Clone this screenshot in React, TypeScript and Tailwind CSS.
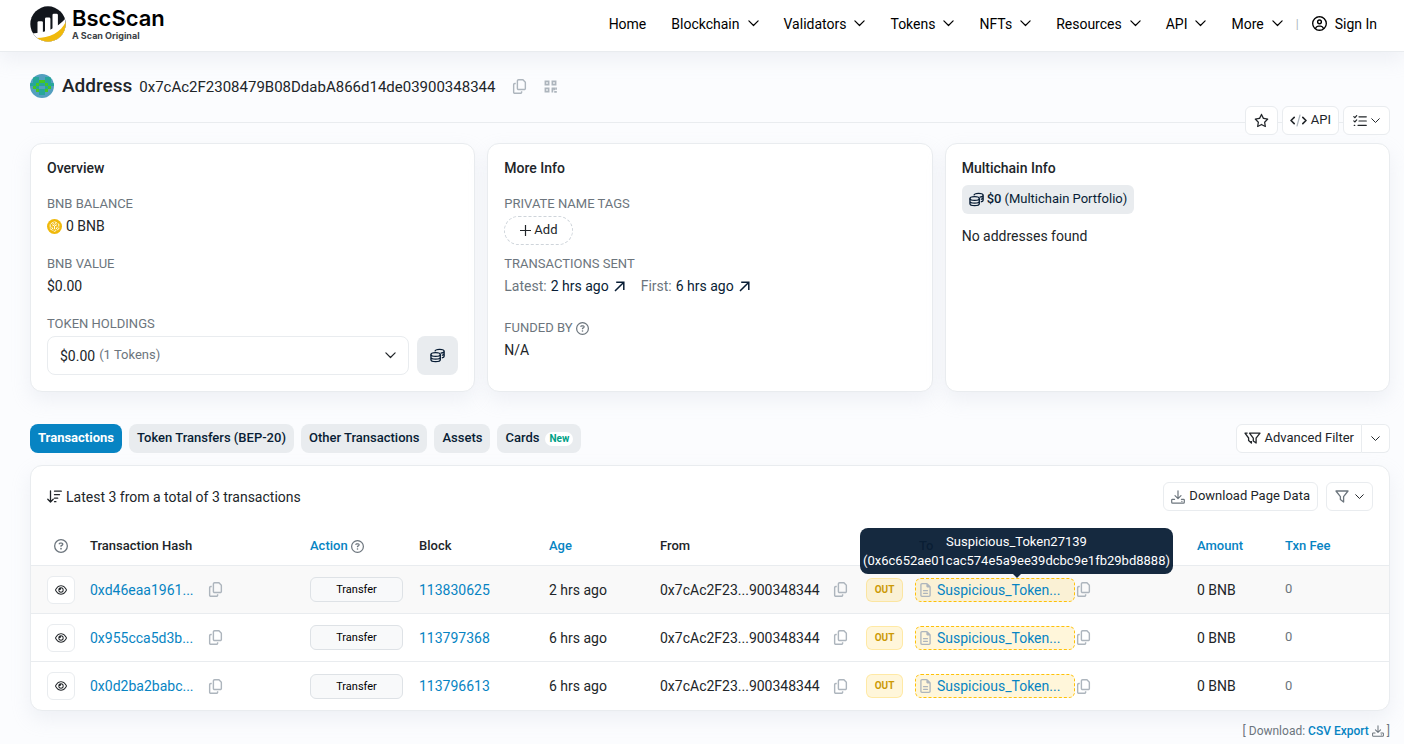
import React from 'react';
import {
  FaRegCopy,
  FaRegStar,
  FaRegCircleQuestion,
  FaRegEye,
  FaRegCircleUser,
  FaRegFileLines,
} from 'react-icons/fa6';

const navItems = ['Blockchain', 'Validators', 'Tokens', 'NFTs', 'Resources', 'API', 'More'];

const transactions = [
  { hash: '0xd46eaa1961...', block: '113830625', age: '2 hrs ago' },
  { hash: '0x955cca5d3b...', block: '113797368', age: '6 hrs ago' },
  { hash: '0x0d2ba2babc...', block: '113796613', age: '6 hrs ago' },
];

const outlineButton =
  'flex h-[29px] items-center rounded-md border border-[#e9ecef] bg-white text-[13px] text-[#212529]';
const card =
  'rounded-xl border border-[#e9ecef] bg-white shadow-[0_8px_19px_rgba(189,197,209,0.2)]';
const tab =
  'flex h-[29px] items-center rounded-lg bg-[#e9ecef] px-2 text-[13px] font-medium text-[#081d35]';

const Chevron = ({ className = 'w-[10px]' }: { className?: string }) => (
  <svg viewBox="0 0 10 6" className={className} fill="none" stroke="currentColor" strokeWidth="1.1" strokeLinecap="round" strokeLinejoin="round">
    <path d="M.8.8 5 5 9.2.8" />
  </svg>
);

const CoinsIcon = () => (
  <svg viewBox="0 0 16 16" className="w-[15px]" fill="none" stroke="currentColor" strokeWidth="1.4">
    <ellipse cx="6" cy="7" rx="5" ry="2" />
    <path d="M1 7v5.500c0 1.100 2.200 2 5 2s5-.9 5-2V7M1 9.800c0 1.100 2.200 2 5 2s5-.9 5-2" />
    <path d="M5.300 3.600C5.500 2.400 7.500 1.500 10.200 1.500c2.700 0 4.900.9 4.900 2s-1.600 1.700-3.800 1.900M15.100 3.500v5.300c0 .8-1 1.400-2.500 1.700M15.100 6.200c0 .8-1 1.400-2.500 1.700" />
  </svg>
);

const DownloadIcon = ({ className }: { className: string }) => (
  <svg viewBox="0 0 14 14" className={className} fill="none" stroke="currentColor" strokeWidth="1.2" strokeLinecap="round" strokeLinejoin="round">
    <path d="M7 .8v7.700M4 5.700l3 3 3-3M3.600 9.300H1.400a.7.7 0 0 0-.7.7v2.300c0 .5.300.9.900.9h10.800c.6 0 .9-.4.9-.9V10a.7.7 0 0 0-.7-.7h-2.200M10.800 11.300h.2" />
  </svg>
);

const SortIcon = () => (
  <svg viewBox="0 0 15 13" className="w-[15px]" fill="none" stroke="currentColor" strokeWidth="1.3" strokeLinecap="round" strokeLinejoin="round">
    <path d="M3.500.8v11M.8 9.200l2.700 2.800 2.700-2.800M7.500 1.200h6.800M7.500 4.700h5M7.500 8.200h3.200M7.500 11.700h1.400" />
  </svg>
);

const FilterIcon = () => (
  <svg viewBox="0 0 14 13" className="w-[14px] text-[#6c757d]" fill="none" stroke="currentColor" strokeWidth="1.3" strokeLinejoin="round">
    <path d="M1 1h12L8.600 6.600V12L5.400 9.600v-3z" />
  </svg>
);

const FiltersIcon = () => (
  <svg viewBox="0 0 17 13" className="w-[17px]" fill="none" stroke="currentColor" strokeWidth="1.3" strokeLinejoin="round">
    <path d="M5.500 1.200h10.500l-3.900 5V11L9.300 9V6.200z" />
    <path d="M3.600 1.200H1l3.600 4.800v2.600L7.400 11V9" />
  </svg>
);

const ArrowIcon = () => (
  <svg viewBox="0 0 11 11" className="w-[11px]" fill="none" stroke="currentColor" strokeWidth="1.5">
    <path d="M1 10 9.800 1.200M2.200 1.300H9.800v7.600" />
  </svg>
);

const CodeIcon = () => (
  <svg viewBox="0 0 17 13" className="w-[17px]" fill="none" strokeLinecap="round" strokeLinejoin="round">
    <path d="M4.200 3.400 1 6.500 4.200 9.600M12.800 3.400 16 6.500 12.800 9.600" stroke="#212529" strokeWidth="1.6" />
    <path d="M10 1 7 12" stroke="#adb5bd" strokeWidth="1.2" />
  </svg>
);

const ListCheckIcon = () => (
  <svg viewBox="0 0 14 12" className="w-[14px]" fill="none" stroke="currentColor" strokeWidth="1.2" strokeLinecap="round">
    <path d="M6 1.800h7.300M6 6h7.300M5 10.300h8.300M.8 1.600l1.100 1L3.700.6M.8 5.900l1.100 1 1.800-2M1.200 10.300h.6" />
  </svg>
);

const QrIcon = () => (
  <svg viewBox="0 0 14 14" className="w-[13px]" fill="none" stroke="#adb5bd" strokeWidth="1.8">
    <path d="M1.500 1.500h3.500v3.500H1.500zM9 1.500h3.500v3.500H9zM1.500 9h3.500v3.500H1.500z" />
    <path d="M8.200 9H11v2M9 9v4.500M13 8.200v2.400M11 12.700h2.800" />
  </svg>
);

const BnbIcon = () => (
  <svg viewBox="0 0 16 16" className="w-[15px]">
    <circle cx="8" cy="8" r="8" fill="#f0b90b" />
    <g fill="none" stroke="#fff" strokeWidth="1">
      <path d="m8 2.800 4.600 2.600v5.200L8 13.200l-4.600-2.600V5.400z" strokeDasharray="3.5 1" />
      <path d="m5.400 6.100 2.600 1.500 2.600-1.500M8 7.600v3.300M5.300 8.200v1.600l1.500.9M10.700 8.200v1.600l-1.500.9M6.500 4.800 8 5.600l1.500-.8" />
    </g>
  </svg>
);

const Identicon = () => (
  <svg viewBox="0 0 24 24" className="size-6 rounded-full">
    <path d="M0 0h24v24H0z" fill="#539fbf" />
    <path d="M3 3h6v3H3zM15 3h6v3h-6zM3 6h6v6H3zM15 6h6v6h-6zM9 9h6v3H9zM0 9h3v3H0zM21 9h3v3h-3zM6 12h3v3H6zM15 12h3v3h-3zM9 15h6v3H9zM9 18h6v3H9z" fill="#27a69a" />
    <path d="M9 6h6v3H9zM6 9h3v3H6zM15 9h3v3h-3zM3 12h3v3H3zM18 12h3v3h-3zM6 15h3v3H6zM15 15h3v3h-3z" fill="#45c722" />
  </svg>
);

const Logo = () => (
  <a href="#" className="flex items-center gap-[6px]">
    <svg viewBox="0 0 36 36" className="size-9">
      <clipPath id="disc">
        <circle cx="18" cy="18" r="17.700" />
      </clipPath>
      <g clipPath="url(#disc)">
        <path d="M0 0h36v36H0z" fill="#12161c" />
        <rect x="7.500" y="15.200" width="5.400" height="14" rx="1.300" fill="#fff" />
        <rect x="15" y="11.500" width="5.400" height="16" rx="1.300" fill="#fff" />
        <rect x="22.500" y="7.800" width="5.400" height="16" rx="1.300" fill="#fff" />
        <path d="M2 27.500C15 27 27.500 22 35.500 12.500L36 36H0z" fill="#fff" />
        <path d="M6 32C19.500 32 31 26.500 36 15.500V36H6z" fill="#f0b90b" />
      </g>
    </svg>
    <span className="flex flex-col font-[Inter,sans-serif]">
      <span className="text-[22px] leading-6 font-semibold text-black">BscScan</span>
      <span className="text-[9px] leading-3 font-bold text-[#3b3f46]">A Scan Original</span>
    </span>
  </a>
);

const CopyButton = () => (
  <button aria-label="Copy" className="text-[#adb5bd]">
    <FaRegCopy size={15} />
  </button>
);

const Label = ({ children }: { children: React.ReactNode }) => (
  <h4 className="flex items-center gap-1 text-[13px] leading-5 text-[#6c757d] uppercase">{children}</h4>
);

const App = () => {
  return (
    <div className="min-h-screen bg-[#fbfcfe] font-[Roboto,sans-serif] text-sm text-[#212529]">
      <header className="flex h-[52px] items-center justify-between border-b border-[#e9ecef] bg-white pr-[27px] pb-1 pl-[30px] shadow-[0_8px_19px_rgba(189,197,209,0.2)]">
        <Logo />
        <nav className="flex items-center gap-[25px] text-black">
          <a href="#">Home</a>
          {navItems.map(item => (
            <button key={item} className="flex items-center gap-2">
              {item}
              <Chevron className="w-[11px]" />
            </button>
          ))}
          <span className="-mx-3 text-xs text-[#adb5bd]">|</span>
          <a href="#" className="flex items-center gap-2">
            <FaRegCircleUser size={15} />
            Sign In
          </a>
        </nav>
      </header>

      <main className="pt-5 pr-[14px] pl-[30px]">
        <div className="flex h-7 items-center">
          <Identicon />
          <div className="mr-[17px] ml-2 flex items-baseline gap-[7px]">
            <h1 className="text-[19px] font-medium">Address</h1>
            <span className="text-[15px]">0x7cAc2F2308479B08DdabA866d14de03900348344</span>
          </div>
          <CopyButton />
          <button aria-label="QR code" className="ml-[17px]">
            <QrIcon />
          </button>
        </div>

        <div className="relative mt-1.5 flex justify-end gap-1">
          <hr className="absolute top-4 w-full border-[#e9ecef]" />
          <button aria-label="Favorite" className={`relative px-2 ${outlineButton}`}>
            <FaRegStar size={15} />
          </button>
          <button className={`relative gap-1 px-[7px] ${outlineButton}`}>
            <CodeIcon />
            API
          </button>
          <button aria-label="More options" className={`relative gap-1 px-[9px] ${outlineButton}`}>
            <ListCheckIcon />
            <Chevron className="w-[9px]" />
          </button>
        </div>

        {/* Summary cards */}
        <div className="mt-2 grid grid-cols-3 gap-3">
          <section className={`px-4 pt-3.5 pb-4 ${card}`}>
            <h3 className="mb-4 leading-5 font-medium">Overview</h3>
            <Label>BNB Balance</Label>
            <div className="mb-4 flex items-center gap-1 leading-6">
              <BnbIcon />0 BNB
            </div>
            <Label>BNB Value</Label>
            <div className="mb-4 leading-6">$0.00</div>
            <Label>Token Holdings</Label>
            <div className="mt-0.5 flex gap-2">
              <button className="flex h-[39px] flex-1 items-center rounded-lg border border-[#e9ecef] px-3">
                $0.00
                <span className="ml-1 text-[13px] text-[#6c757d]">(1 Tokens)</span>
                <Chevron className="ml-auto w-[11px]" />
              </button>
              <button aria-label="Portfolio" className="flex h-[39px] w-[41px] items-center justify-center rounded-lg bg-[#e9ecef] text-[#081d35]">
                <CoinsIcon />
              </button>
            </div>
          </section>

          <section className={`px-4 pt-3.5 pb-4 ${card}`}>
            <h3 className="mb-4 leading-5 font-medium">More Info</h3>
            <Label>Private Name Tags</Label>
            <button className="mt-0.5 mb-[9px] flex h-[29px] items-center gap-[3px] rounded-full border border-dashed border-[#ced4da] px-[15px] text-[13px]">
              <svg viewBox="0 0 11 11" className="w-[11px]" stroke="currentColor" strokeWidth="1.2">
                <path d="M5.500 0v11M0 5.500h11" />
              </svg>
              Add
            </button>
            <Label>Transactions Sent</Label>
            <div className="mb-5 flex gap-4 leading-6 text-[#6c757d]">
              <span className="flex items-center gap-1">
                Latest:
                <a href="#" className="flex items-center gap-[5px] text-[#081d35]">2 hrs ago <ArrowIcon /></a>
              </span>
              <span className="flex items-center gap-1">
                First:
                <a href="#" className="flex items-center gap-[5px] text-[#081d35]">6 hrs ago <ArrowIcon /></a>
              </span>
            </div>
            <Label>
              Funded By <FaRegCircleQuestion size={13} />
            </Label>
            <div className="leading-6">N/A</div>
          </section>

          <section className={`px-4 pt-3.5 pb-4 ${card}`}>
            <h3 className="mb-[7px] leading-5 font-medium">Multichain Info</h3>
            <a href="#" className="mb-2.5 inline-flex h-[29px] items-center gap-[3px] rounded-md bg-[#e9ecef] px-[7px] text-[13px] text-[#081d35]">
              <CoinsIcon />
              <span className="font-medium">$0</span> (Multichain Portfolio)
            </a>
            <div className="leading-6">No addresses found</div>
          </section>
        </div>

        {/* Tabs */}
        <div className="mt-8 flex items-center justify-between">
          <div className="flex gap-[7px]">
            <button className="flex h-[29px] items-center rounded-lg bg-[#0784c3] px-2 text-[13px] font-bold text-white">
              Transactions
            </button>
            <button className={tab}>Token Transfers (BEP-20)</button>
            <button className={tab}>Other Transactions</button>
            <button className={tab}>Assets</button>
            <button className={tab}>
              Cards
              <span className="ml-1.5 rounded-full bg-white px-1 text-[10px] leading-[14px] font-bold text-[#00a186]">New</span>
            </button>
          </div>
          <div className="flex">
            <button className={`gap-[3px] px-[7px] ${outlineButton} rounded-r-none`}>
              <FiltersIcon />
              Advanced Filter
            </button>
            <button aria-label="Filter options" className={`px-[9px] ${outlineButton} rounded-l-none border-l-0`}>
              <Chevron className="w-[9px]" />
            </button>
          </div>
        </div>

        {/* Transactions table */}
        <section className={`mt-3 ${card}`}>
          <div className="flex items-center justify-between p-4">
            <div className="flex items-center gap-1">
              <SortIcon />
              Latest 3 from a total of 3 transactions
            </div>
            <div className="flex gap-2">
              <button className={`gap-1 px-[7px] ${outlineButton}`}>
                <DownloadIcon className="w-[14px] text-[#6c757d]" />
                Download Page Data
              </button>
              <button aria-label="Filter" className={`gap-1.5 px-2 ${outlineButton}`}>
                <FilterIcon />
                <Chevron className="w-[9px]" />
              </button>
            </div>
          </div>

          <table className="w-full table-fixed border-separate border-spacing-0 text-left">
            <thead>
              <tr className="h-[39px] text-[13px] *:border-b *:border-[#e9ecef] *:font-medium">
                <th className="w-[59px] pl-[23px] text-[#6c757d]">
                  <FaRegCircleQuestion size={14} />
                </th>
                <th className="w-[220px]">Transaction Hash</th>
                <th className="w-[109px] text-[#0784c3]">
                  <span className="flex items-center gap-[3px]">
                    Action <FaRegCircleQuestion size={13} className="text-[#6c757d]" />
                  </span>
                </th>
                <th className="w-[130px]">Block</th>
                <th className="w-[111px] text-[#0784c3]">Age</th>
                <th className="w-[206px]">From</th>
                <th className="w-[49px]"></th>
                <th className="w-[282px] pl-1">To</th>
                <th className="w-[88px] text-[#0784c3]">Amount</th>
                <th className="text-[#0784c3]">Txn Fee</th>
              </tr>
            </thead>
            <tbody>
              {transactions.map((tx, i) => (
                <tr key={tx.hash} className="h-12 *:border-b *:border-[#e9ecef] first:bg-[#f9f9f9] last:*:border-b-0">
                  <td className="pl-4">
                    <button aria-label="Preview" className="flex size-7 items-center justify-center rounded-md border border-[#e9ecef] bg-white">
                      <FaRegEye size={12} />
                    </button>
                  </td>
                  <td>
                    <span className="flex items-center">
                      <a href="#" className="w-[118px] text-[#0784c3]">{tx.hash}</a>
                      <CopyButton />
                    </span>
                  </td>
                  <td>
                    <span className="block w-[93px] rounded-md border border-[#dee2e6] bg-[#f8f9fa] text-center text-[11px] leading-[23px] text-black">
                      Transfer
                    </span>
                  </td>
                  <td><a href="#" className="text-[#0784c3]">{tx.block}</a></td>
                  <td>{tx.age}</td>
                  <td>
                    <span className="flex items-center">
                      <span className="w-[173px]">0x7cAc2F23...900348344</span>
                      <CopyButton />
                    </span>
                  </td>
                  <td>
                    <span className="block w-[37px] rounded-md border border-[#ffc107]/25 bg-[#ffc107]/15 text-center text-[10px] leading-[22px] font-bold text-[#cc9a06]">
                      OUT
                    </span>
                  </td>
                  <td>
                    <span className="relative flex items-center gap-px">
                      <a href="#" className="flex h-6 w-[160px] items-center gap-1.5 rounded-md border border-dashed border-[#ffc107] bg-[#ffc107]/15 px-1 text-[#0784c3]">
                        <FaRegFileLines className="h-[14px] w-[11px] text-[#adb5bd]" />
                        Suspicious_Token...
                      </a>
                      <CopyButton />
                      {i === 0 && (
                        <span role="tooltip" className="absolute bottom-7 left-[-55px] flex w-[313px] flex-col items-center rounded-lg bg-[#081d35]/95 py-1 text-[13px] leading-[19px] text-white">
                          <span>Suspicious_Token27139</span>
                          <span>(0x6c652ae01cac574e5a9ee39dcbc9e1fb29bd8888)</span>
                          <span className="absolute top-full border-x-4 border-t-4 border-x-transparent border-t-[#081d35]/95" />
                        </span>
                      )}
                    </span>
                  </td>
                  <td>0 BNB</td>
                  <td className="text-[13px] text-[#6c757d]">0</td>
                </tr>
              ))}
            </tbody>
          </table>
        </section>

        <div className="mt-2.5 flex items-center justify-end gap-[3px] text-xs leading-5 text-[#6c757d]">
          <span>[ Download:</span>
          <a href="#" className="font-medium text-[#0784c3]">CSV Export</a>
          <DownloadIcon className="w-[12px]" />
          <span>]</span>
        </div>
      </main>
    </div>
  );
};

export default App;
